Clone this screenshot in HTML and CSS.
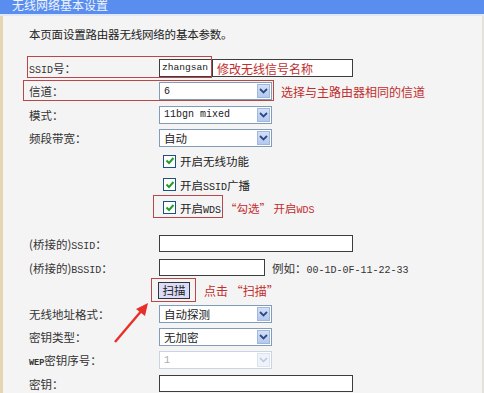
FILE: index.html
```html
<!DOCTYPE html>
<html>
<head>
	<meta charset="utf-8">
	<title>无线网络基本设置</title>
	<link rel="stylesheet" href="styles.css">
</head>
<body>
	<div class="page">
		<div class="titlebar">无线网络基本设置</div>
		<div class="content">
			<p class="intro">本页面设置路由器无线网络的基本参数。</p>

			<div class="group">
				<div class="row">
					<span class="lbl"><span class="en">SSID</span>号：</span>
					<div class="textbox wide ssid">
						<span class="ssidval en">zhangsan</span>
						<span class="note">修改无线信号名称</span>
					</div>
				</div>
				<div class="row">
					<span class="lbl">信道：</span>
					<div class="select"><span class="val en">6</span><span class="arrow"><svg width="9" height="6" viewBox="0 0 9 6"><path d="M1 1 L4.5 4.5 L8 1" fill="none" stroke="#2c4b86" stroke-width="1.8"/></svg></span></div>
					<span class="note gap">选择与主路由器相同的信道</span>
				</div>
				<div class="row">
					<span class="lbl">模式：</span>
					<div class="select"><span class="val en">11bgn mixed</span><span class="arrow"><svg width="9" height="6" viewBox="0 0 9 6"><path d="M1 1 L4.5 4.5 L8 1" fill="none" stroke="#2c4b86" stroke-width="1.8"/></svg></span></div>
				</div>
				<div class="row">
					<span class="lbl">频段带宽：</span>
					<div class="select"><span class="val">自动</span><span class="arrow"><svg width="9" height="6" viewBox="0 0 9 6"><path d="M1 1 L4.5 4.5 L8 1" fill="none" stroke="#2c4b86" stroke-width="1.8"/></svg></span></div>
				</div>
				<div class="row">
					<span class="lbl"></span>
					<span class="check"><svg width="10" height="10" viewBox="0 0 10 10"><path d="M1.5 4.5 L4 7 L8.5 2" fill="none" stroke="#22a022" stroke-width="2"/></svg></span>
					<span class="ctext">开启无线功能</span>
				</div>
				<div class="row">
					<span class="lbl"></span>
					<span class="check"><svg width="10" height="10" viewBox="0 0 10 10"><path d="M1.5 4.5 L4 7 L8.5 2" fill="none" stroke="#22a022" stroke-width="2"/></svg></span>
					<span class="ctext">开启<span class="en">SSID</span>广播</span>
				</div>
				<div class="row">
					<span class="lbl"></span>
					<span class="check"><svg width="10" height="10" viewBox="0 0 10 10"><path d="M1.5 4.5 L4 7 L8.5 2" fill="none" stroke="#22a022" stroke-width="2"/></svg></span>
					<span class="ctext">开启<span class="en">WDS</span></span>
					<span class="note wds">“勾选” 开启<span class="en">WDS</span></span>
				</div>
			</div>

			<div class="group second">
				<div class="row r24">
					<span class="lbl">(桥接的)<span class="en">SSID</span>：</span>
					<div class="textbox wide"></div>
				</div>
				<div class="row r24">
					<span class="lbl">(桥接的)<span class="en">BSSID</span>：</span>
					<div class="textbox short"></div>
					<span class="hint">例如：<span class="en">00-1D-0F-11-22-33</span></span>
				</div>
				<div class="row r22">
					<span class="lbl"></span>
					<span class="scanbtn">扫描</span>
					<span class="note scan">点击 “扫描”</span>
				</div>
				<div class="row">
					<span class="lbl">无线地址格式：</span>
					<div class="select"><span class="val">自动探测</span><span class="arrow"><svg width="9" height="6" viewBox="0 0 9 6"><path d="M1 1 L4.5 4.5 L8 1" fill="none" stroke="#2c4b86" stroke-width="1.8"/></svg></span></div>
				</div>
				<div class="row">
					<span class="lbl">密钥类型：</span>
					<div class="select"><span class="val">无加密</span><span class="arrow"><svg width="9" height="6" viewBox="0 0 9 6"><path d="M1 1 L4.5 4.5 L8 1" fill="none" stroke="#2c4b86" stroke-width="1.8"/></svg></span></div>
				</div>
				<div class="row">
					<span class="lbl"><span class="en small">WEP</span>密钥序号：</span>
					<div class="select off"><span class="val en">1</span><span class="arrow"><svg width="9" height="6" viewBox="0 0 9 6"><path d="M1 1 L4.5 4.5 L8 1" fill="none" stroke="#b9c6dc" stroke-width="1.5"/></svg></span></div>
				</div>
				<div class="row">
					<span class="lbl">密钥：</span>
					<div class="textbox wide"></div>
				</div>
			</div>
		</div>

		<!-- annotation marks drawn over the form -->
		<div class="mark m-ssid"></div>
		<div class="mark m-chan"></div>
		<div class="mark m-wds"></div>
		<div class="mark m-scan"></div>
		<svg class="pointer" width="50" height="50" viewBox="0 0 50 50">
			<path d="M5 46 L33 13" stroke="#e8302a" stroke-width="2.4" fill="none"/>
			<path d="M38 7 L26 13 L35 20 Z" fill="#e8302a"/>
		</svg>
	</div>
</body>
</html>
```
FILE: styles.css
```css
body {
	margin: 0;
	background: #f3f3f3;
	font-family: "Noto Sans CJK SC", sans-serif;
	font-size: 11.5px;
	color: #222;
}
.page {
	position: relative;
	width: 484px;
	height: 393px;
	overflow: hidden;
	background: #f4f4f4;
}
.titlebar {
	height: 14px;
	background: #5a8eee;
	border-bottom: 2px solid #dfe9fb;
	color: #eef4ff;
	font-size: 12px;
	line-height: 9px;
	padding-left: 12px;
	overflow: hidden;
}
.content {
	border-left: 3px solid #e6d5b2;
	border-right: 2px solid #e4e1da;
	height: 377px;
	padding-left: 26px;
}
.intro {
	margin: 0;
	padding-top: 11px;
	line-height: 14px;
	height: 14px;
	font-size: 11.5px;
	letter-spacing: -0.2px;
}
.group {
	margin-top: 15.5px;
}
.group.second {
	margin-top: 12.4px;
}
.row {
	display: flex;
	align-items: center;
	height: 23.3px;
}
.r24 { height: 24px; }
.r22 { height: 22px; }
.lbl {
	width: 130px;
	flex: none;
	color: #333;
}
.en {
	font-family: "Liberation Mono", monospace;
	font-size: 10px;
}
.small {
	font-size: 8.5px;
	font-weight: bold;
}
.textbox {
	height: 15px;
	border: 1px solid #3d3d3d;
	background: #fff;
	display: flex;
	align-items: center;
}
.wide { width: 192px; }
.short { width: 104px; }
.ssid {
	height: 16px;
}
.ssidval {
	width: 50px;
	padding-left: 2px;
	height: 16px;
	line-height: 16px;
	border-right: 1px solid #3d3d3d;
	background: #fff;
	font-size: 9.6px;
}
.note {
	color: #c22d2d;
	font-size: 12px;
	padding-left: 4px;
}
.note.gap { padding-left: 9px; }
.note.wds { padding-left: 4px; font-size: 11.5px; }
.note.scan { padding-left: 14px; }
.select {
	width: 111px;
	height: 16px;
	border: 1px solid #7f9db9;
	background: #fff;
	display: flex;
	justify-content: space-between;
	align-items: center;
}
.select .val {
	padding-left: 4px;
}
.arrow {
	width: 13px;
	height: 14px;
	margin-right: 1px;
	background: linear-gradient(#d3e0f7, #b4c8ee);
	border: 1px solid #a3b7dc;
	box-sizing: border-box;
	display: flex;
	align-items: center;
	justify-content: center;
}
.select.off {
	border-color: #c9d3e2;
	color: #aaa;
}
.select.off .arrow {
	background: #eef2fa;
	border-color: #dbe3f0;
}
.check {
	width: 11px;
	height: 11px;
	margin-left: 4px;
	border: 1px solid #1c5180;
	background: #fff;
	display: flex;
	align-items: center;
	justify-content: center;
}
.ctext {
	padding-left: 4px;
}
.hint {
	padding-left: 7px;
	color: #333;
}
.scanbtn {
	margin-left: -1px;
	width: 30px;
	height: 15px;
	line-height: 15px;
	text-align: center;
	background: #dadcf8;
	border: 1px solid #333;
	font-size: 11.5px;
}
.mark {
	position: absolute;
	border: 1.5px solid #b8474a;
}
.m-ssid { left: 27px; top: 56px; width: 183px; height: 20px; }
.m-chan { left: 23px; top: 80px; width: 249px; height: 19px; }
.m-wds { left: 153px; top: 195px; width: 68px; height: 21px; }
.m-scan { left: 151px; top: 278px; width: 43px; height: 22px; }
.pointer {
	position: absolute;
	left: 110px;
	top: 296px;
}
```
